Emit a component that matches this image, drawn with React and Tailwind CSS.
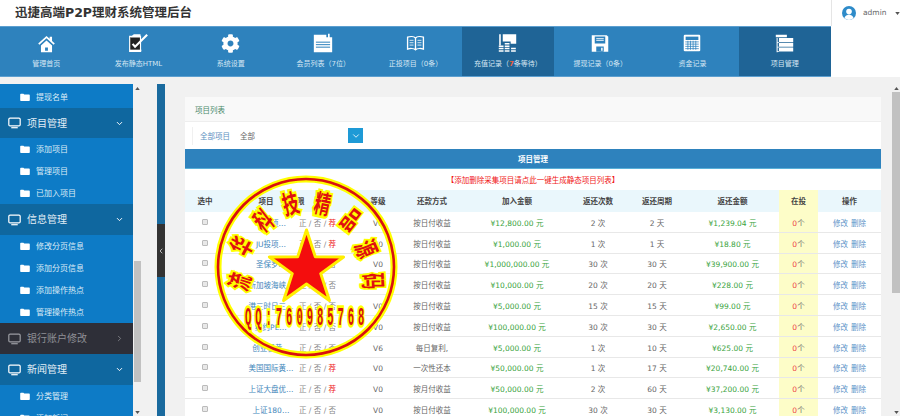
import React from "react";
import { ChevronDown, ChevronRight, ChevronLeft } from "lucide-react";
import { FaCog } from "react-icons/fa";

const cjk = { fontFamily: '"DejaVu Sans","Noto Sans CJK SC",sans-serif' };

const Home = () => (
  <svg viewBox="0 0 24 24" className="w-[19px] h-[19px]" fill="#fff">
    <path d="M12 2.5 1.5 12 3 13.5l9-8 9 8 1.5-1.5L19 8.8V3.5h-3v2.6z" />
    <path d="M5 14.5 12 8.3l7 6.2V23H5zM10.2 17v4h3.6v-4z" fillRule="evenodd" />
  </svg>
);
const EditIcon = () => (
  <svg viewBox="0 0 24 24" className="w-[22px] h-[20px]">
    <path d="M2 4h9l4 0v18H2z" fill="#222" stroke="#fff" strokeWidth="1.4" />
    <path d="M2.5 5.5 7 1.5h8v4z" fill="#fff" />
    <path d="M16 20v2H2v-2z" fill="#fff" />
    <path d="m5.5 13 3 3.5L23 2" fill="none" stroke="#fff" strokeWidth="2.6" />
  </svg>
);
const News = () => (
  <svg viewBox="0 0 24 24" className="w-[20px] h-[20px]">
    <path d="M1 2h15v3h2V1h2v4h3v18H1z" fill="#fff" />
    <path d="M3.5 11h17M3.5 14h17M3.5 17h17" stroke="#2e82bd" strokeWidth="1.2" />
  </svg>
);
const Book = () => (
  <svg viewBox="0 0 24 24" className="w-[19px] h-[19px]" fill="none" stroke="#fff">
    <path d="M12 5C10 3 5 3 2 4v15c3-1 8-1 10 1 2-2 7-2 10-1V4c-3-1-8-1-10 1zM12 5v15" strokeWidth="1.7" />
    <path d="M4.5 8h5M4.5 11h5M4.5 14h5M14.5 8h5M14.5 11h5M14.5 14h5" strokeWidth="1" />
  </svg>
);
const Coins = () => (
  <svg viewBox="0 0 24 24" className="w-[19px] h-[20px]" fill="#fff">
    <path d="M1.5 1h2v14h-2zM6 1h17v12h-7v-3H6z" />
    <path d="M1 15h6v2H1zM1 18h6v2H1zM1 21h6v2H1zM8.5 12h6v2h-6zM8.5 15h6v2h-6zM8.5 18h6v2h-6zM8.5 21h6v2h-6zM16.5 18h6v2h-6zM16.5 21h6v2h-6z" />
  </svg>
);
const Floppy = () => (
  <svg viewBox="0 0 24 24" className="w-[18px] h-[19px]">
    <path d="M1 1h20l2 2v20H1z" fill="#fff" />
    <path d="M5 2.5h14v9.5H5zM7 16h10v7H7z" fill="#2e82bd" />
    <path d="M7 5h10v1.2H7zM7 7.5h10v1.2H7z" fill="#fff" />
    <path d="M13.5 17.5h2v4h-2z" fill="#fff" />
  </svg>
);
const Calc = () => (
  <svg viewBox="0 0 24 24" className="w-[18px] h-[18px]">
    <rect x="1" y="1" width="22" height="22" rx="1.5" fill="#fff" />
    <rect x="3.5" y="3.5" width="17" height="4.5" fill="#2e82bd" />
    <path d="M3 10.5h18M3 13.5h18M3 16.5h18M3 19.5h18M6.5 9v12M10 9v12M13.5 9v12M17 9v12" stroke="#2e82bd" strokeWidth="1" />
  </svg>
);
const Stack = () => (
  <svg viewBox="0 0 24 24" className="w-[19px] h-[19px]" fill="#fff">
    <path d="M1 1h14v3H1zM5 5h18v5H5zM5 11h18v5H5zM5 17h18v5H5z" />
    <path d="M2 5h1.3v18H2zM2 10h3v1H2zM2 16h3v1H2zM2 21.5h3v1H2z" />
  </svg>
);

const navItems = [
  [Home, "管理首页"],
  [EditIcon, "发布静态HTML"],
  [() => <FaCog className="w-[19px] h-[19px] text-white" />, "系统设置"],
  [News, "会员列表（7位）"],
  [Book, "正投项目（0条）"],
  [Coins, <span key="c">充值记录（<span className="text-[#f0603a] font-bold">7</span>条等待）</span>, true],
  [Floppy, "提现记录（0条）"],
  [Calc, "资金记录"],
  [Stack, "项目管理", true],
];

const Monitor = ({ muted }) => (
  <svg viewBox="0 0 16 14" className="w-[13px] h-[12px] shrink-0" fill="none" stroke={muted ? "#9a9ba1" : "#fff"}>
    <rect x="1" y="1" width="14" height="9.5" rx="1.5" strokeWidth="1.5" />
    <path d="M4 12.8h8" strokeWidth="1.5" />
  </svg>
);
const Folder = () => (
  <svg viewBox="0 0 12 10" className="w-[10px] h-[8px] shrink-0" fill="#fff">
    <path d="M0 2a1 1 0 0 1 1-1h3l1 1h6a1 1 0 0 1 1 1v6a1 1 0 0 1-1 1H1a1 1 0 0 1-1-1z" />
  </svg>
);

const Sub = ({ children, first }) => (
  <div className={`flex items-center pl-5 gap-[6px] text-[8px] text-[#dcebf6] ${first ? "h-[24px] pt-[2px]" : "h-[22px]"}`}>
    <Folder />
    <span className="pt-[2px]">{children}</span>
  </div>
);
const Group = ({ children, h = "h-[31px]" }) => (
  <div className={`${h} flex items-center pl-2 pr-[9px] bg-[#0f679f] text-white text-[10px]`}>
    <Monitor />
    <span className="ml-[6px] flex-1 text-[#e3eef6]">{children}</span>
    <ChevronDown className="w-[9px] h-[9px]" strokeWidth={2.5} />
  </div>
);

const cols = "grid grid-cols-[40px_72px_61px_40px_68px_102px_60px_58px_93px_39px_63px]";

const rows = [
  ["…恒项…", "荐", "V0", "按日付收益", "¥12,800.00 元", "2 次", "2 天", "¥1,239.04 元"],
  ["JU投项…", "荐", "V0", "按日付收益", "¥1,000.00 元", "1 次", "1 天", "¥18.80 元"],
  ["圣保罗…", "否", "V0", "按日付收益", "¥1,000,000.00 元", "30 次", "30 天", "¥39,900.00 元"],
  ["新加坡海峡…", "否", "V0", "按日付收益", "¥10,000.00 元", "20 次", "20 天", "¥228.00 元"],
  ["港三时日三…", "否", "V0", "按日付收益", "¥5,000.00 元", "15 次", "15 天", "¥99.00 元"],
  ["纽约PE…", "否", "V0", "按日付收益", "¥100,000.00 元", "30 次", "30 天", "¥2,650.00 元"],
  ["创业板黄…", "否", "V6", "每日复利,", "¥5,000.00 元", "1 次", "10 天", "¥625.00 元"],
  ["美国国际黄…", "荐", "V0", "一次性还本", "¥50,000.00 元", "1 次", "17 天", "¥20,740.00 元"],
  ["上证大盘优…", "荐", "V0", "按月付收益", "¥50,000.00 元", "2 次", "60 天", "¥37,200.00 元"],
  ["上证180…", "否", "V0", "按日付收益", "¥100,000.00 元", "30 次", "30 天", "¥3,130.00 元"],
];

const Arrow = ({ up }) => (
  <div className="h-[8px] flex items-center justify-center text-[#555]">
    <svg viewBox="0 0 6 4" className="w-[5px] h-[3px]" fill="currentColor">
      <path d={up ? "M3 0 6 4H0z" : "M0 0h6L3 4z"} />
    </svg>
  </div>
);

const chars = [
  ["流", 238, 281, -72],
  ["华", 240, 245, -62],
  ["科", 262, 219, -38],
  ["技", 290, 202, -14],
  ["精", 323, 202, 12],
  ["品", 352, 218, 38],
  ["源", 368, 248, 66],
  ["码", 375, 281, 86],
];

const starPoints = Array.from({ length: 10 }, (_, i) => {
  const r = i % 2 ? 15 : 39;
  const a = (-90 + i * 36) * (Math.PI / 180);
  return `${306.5 + r * Math.cos(a)},${269 + r * Math.sin(a)}`;
}).join(" ");

const Stamp = () => (
  <svg className="absolute left-0 top-0 w-[900px] h-[416px] pointer-events-none" viewBox="0 0 900 416">
    <circle cx="306" cy="267" r="88" fill="none" stroke="#ffff00" strokeWidth="7" />
    <circle cx="306" cy="267" r="88" fill="none" stroke="#d81010" strokeWidth="2.6" />
    <polygon points={starPoints} fill="#f40d0d" stroke="#ffee00" strokeWidth="3" strokeLinejoin="round" />
    {chars.map(([c, x, y, r]) => (
      <text
        key={c}
        transform={`translate(${x} ${y}) rotate(${r}) scale(0.85 1.35)`}
        textAnchor="middle"
        dominantBaseline="central"
        fontSize="19"
        fontWeight="700"
        fontFamily='"Noto Sans CJK SC",sans-serif'
        fill="#e01010"
        stroke="#ffff00"
        strokeWidth="3.5"
        paintOrder="stroke"
      >
        {c}
      </text>
    ))}
    <text
      transform="translate(245 325) scale(0.75 1.9)"
      fontSize="14"
      fontWeight="700"
      letterSpacing="5.3"
      fontFamily='"Liberation Mono",monospace'
      fill="#d81010"
      stroke="#ffff00"
      strokeWidth="3"
      paintOrder="stroke"
    >
      QQ:760985768
    </text>
  </svg>
);

export default function App() {
  return (
    <div className="relative w-[900px] h-[416px] overflow-hidden bg-[#f1f1f1] text-[7.5px] text-[#666]" style={cjk}>
      <header className="h-[26px] bg-white flex items-stretch">
        <div className="flex-1 flex items-center pl-[15px] pt-[1px] text-[12.5px] font-bold text-[#333]">迅捷高端P2P理财系统管理后台</div>
        <div className="w-[69px] border-l border-[#e5e5e5] flex items-center pl-[10px] gap-[7px]">
          <svg viewBox="0 0 14 14" className="w-[14px] h-[14px] shrink-0">
            <circle cx="7" cy="7" r="7" fill="#2e8bc9" />
            <circle cx="7" cy="5.6" r="2.8" fill="#fff" />
            <path d="M2.4 12c.8-2.4 2.6-3.2 4.6-3.2s3.8.8 4.6 3.2A7 7 0 0 1 7 14a7 7 0 0 1-4.6-2z" fill="#fff" />
          </svg>
          <span className="text-[7.5px] text-[#666]">admin</span>
          <svg viewBox="0 0 6 4" className="w-[5px] h-[3px] ml-[1px]" fill="#555"><path d="M0 0h6L3 4z" /></svg>
        </div>
      </header>

      <nav className="h-[51px] flex bg-white">
        <div className="w-[831px] grid grid-cols-9 bg-[#2e82bd] border-t border-b border-[#5c9fd0]">
          {navItems.map(([Icon, label, active], i) => (
            <div key={i} className={`flex flex-col items-center pt-[4px] ${active ? "bg-[#1f6496]" : ""}`}>
              <div className="h-[24px] flex items-center justify-center"><Icon /></div>
              <div className="mt-[4px] text-[7px] text-[#d5e6f3] whitespace-nowrap">{label}</div>
            </div>
          ))}
        </div>
      </nav>

      <main className="h-[339px] flex pt-[7px]">
        <aside className="w-[133px] shrink-0 overflow-hidden bg-[#0d7bc6]">
          <Sub first>提现名单</Sub>
          <Group h="h-[30px]">项目管理</Group>
          <Sub>添加项目</Sub>
          <Sub>管理项目</Sub>
          <Sub>已加入项目</Sub>
          <Group>信息管理</Group>
          <Sub>修改分页信息</Sub>
          <Sub>添加分页信息</Sub>
          <Sub>添加操作热点</Sub>
          <Sub>管理操作热点</Sub>
          <div className="h-[31px] flex items-center pl-2 pr-[9px] bg-[#2e2f38] text-[10px] text-[#8f9096]">
            <Monitor muted />
            <span className="ml-[6px] flex-1">银行账户修改</span>
            <ChevronRight className="w-[9px] h-[9px]" strokeWidth={2} />
          </div>
          <Group>新闻管理</Group>
          <Sub>分类管理</Sub>
          <Sub>添加新闻</Sub>
        </aside>

        <div className="w-[9px] shrink-0 flex flex-col bg-[#f1f1f1] px-[1px]">
          <Arrow up />
          <div className="flex-1 flex flex-col justify-end pb-[26px]">
            <div className="h-[121px] bg-[#c1c1c1]" />
          </div>
          <Arrow />
        </div>

        <div className="ml-[15px] w-[8px] shrink-0 flex flex-col bg-[#1a6a9e]">
          <div className="h-[140px]" />
          <div className="h-[53px] bg-[#333] flex items-center justify-center text-white">
            <ChevronLeft className="w-[8px] h-[10px]" strokeWidth={2} />
          </div>
        </div>

        <section className="ml-[20px] w-[696px] shrink-0 pt-[13px]">
          <div className="h-[25px] bg-[#f9f9f9] border-b border-[#eeeeee] flex items-center pl-[10px] pt-[4px] text-[#4a8a6a] text-[7.5px]">项目列表</div>
          <div className="h-[27px] bg-white flex items-center pl-[7px]">
            <div className="flex items-center w-[171px] h-[18px] border-l border-[#f0f0f0] pl-[7px] pr-0">
              <span className="pt-[3px] text-[#5b8fc0]">全部项目</span>
              <span className="pt-[3px] ml-[10px] flex-1 text-[#666]">全部</span>
              <span className="w-[15px] h-[15px] bg-[#1e9ad6] flex items-center justify-center text-white">
                <ChevronDown className="w-[10px] h-[10px]" strokeWidth={2} />
              </span>
            </div>
          </div>
          <div className="h-[20px] bg-[#2e82bd] border-b border-[#59b0d8] flex items-center justify-center pt-[2px] font-bold text-white">项目管理</div>
          <div className="h-[21px] bg-white flex items-center justify-center pt-[3px] text-[#f01818]">【添加删除采集项目请点此一键生成静态项目列表】</div>

          <div className={`${cols} h-[22px] bg-[#eaf7fc] font-bold text-[#444] items-stretch`}>
            {["选中", "项目", "限", "等级", "还款方式", "加入金额", "返还次数", "返还周期", "返还金额", "在投", "操作"].map((h, i) => (
              <div
                key={h}
                className={`flex items-center pt-[2px] ${i === 1 ? "justify-center pl-[10px]" : i === 2 ? "justify-start" : "justify-center"} ${i === 9 ? "bg-[#fdfdc8]" : ""}`}
              >
                {h}
              </div>
            ))}
          </div>

          {rows.map((r, i) => (
            <div key={i} className={`${cols} h-[20.8px] bg-white border-b border-[#e8e8e8] items-stretch`}>
              <div className="flex items-center justify-center">
                <span className="w-[6px] h-[6px] rounded-[1px] bg-[#e8e8e8] border border-[#bbb]" />
              </div>
              <div className="flex items-center justify-center pt-[3px] pl-[20px] whitespace-nowrap text-[#3f86ba]">{r[0]}</div>
              <div className="flex items-center justify-center pt-[3px] pr-[20px] whitespace-nowrap text-[#888]">
                正 / 否 /&nbsp;<span className={r[1] === "荐" ? "text-[#ee1c1c]" : ""}>{r[1]}</span>
              </div>
              <div className="flex items-center justify-center pt-[3px]">{r[2]}</div>
              <div className="flex items-center justify-center pt-[3px]">{r[3]}</div>
              <div className="flex items-center justify-center pt-[3px] whitespace-nowrap text-[#39a33d]">{r[4]}</div>
              <div className="flex items-center justify-center pt-[3px]">{r[5]}</div>
              <div className="flex items-center justify-center pt-[3px]">{r[6]}</div>
              <div className="flex items-center justify-center pt-[3px] whitespace-nowrap text-[#39a33d]">{r[7]}</div>
              <div className="flex items-center justify-center pt-[3px] bg-[#fdfdc8]"><span className="text-[#ee4444]">0</span>个</div>
              <div className="flex items-center justify-center pt-[3px] gap-[3px] text-[#5b93c7]"><span>修改</span><span>删除</span></div>
            </div>
          ))}
        </section>

        <div className="ml-[11px] w-[8px] shrink-0 flex flex-col bg-[#f1f1f1]">
          <Arrow up />
          <div className="flex-1">
            <div className="h-[201px] bg-[#c1c1c1]" />
          </div>
          <Arrow />
        </div>
      </main>

      <Stamp />
    </div>
  );
}
